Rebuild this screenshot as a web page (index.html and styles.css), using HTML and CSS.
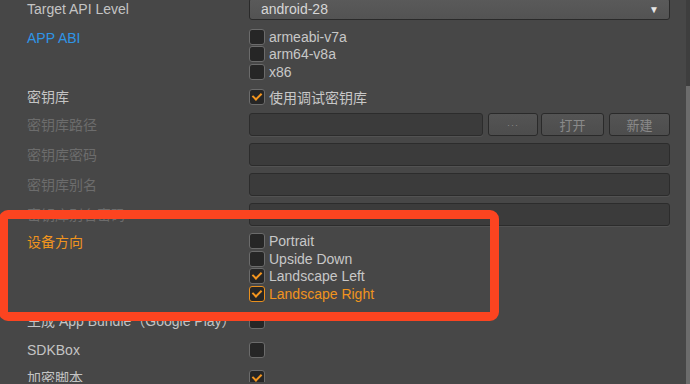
FILE: index.html
```html
<!DOCTYPE html>
<html lang="zh">
<head>
    <meta charset="UTF-8">
    <title>Android Settings</title>
    <link rel="stylesheet" href="styles.css">
</head>
<body>
    <div class="panel">
        <div class="row row-target">
            <div class="label">Target API Level</div>
            <div class="control">
                <div class="dropdown"><span>android-28</span><span class="arrow">▼</span></div>
            </div>
        </div>

        <div class="row row-abi">
            <div class="label blue">APP ABI</div>
            <div class="control list">
                <div class="check"><span class="box"></span>armeabi-v7a</div>
                <div class="check"><span class="box"></span>arm64-v8a</div>
                <div class="check"><span class="box"></span>x86</div>
            </div>
        </div>

        <div class="row row-keystore">
            <div class="label">密钥库</div>
            <div class="control">
                <div class="check"><span class="box on"></span>使用调试密钥库</div>
            </div>
        </div>

        <div class="row field-row">
            <div class="label dim">密钥库路径</div>
            <div class="control">
                <div class="field short"></div>
                <div class="btn b1">···</div>
                <div class="btn b2">打开</div>
                <div class="btn b3">新建</div>
            </div>
        </div>
        <div class="row field-row">
            <div class="label dim">密钥库密码</div>
            <div class="control"><div class="field"></div></div>
        </div>
        <div class="row field-row">
            <div class="label dim">密钥库别名</div>
            <div class="control"><div class="field"></div></div>
        </div>
        <div class="row field-row">
            <div class="label dim">密钥库别名密码</div>
            <div class="control"><div class="field"></div></div>
        </div>

        <div class="row row-orient">
            <div class="label orange">设备方向</div>
            <div class="control list">
                <div class="check"><span class="box"></span>Portrait</div>
                <div class="check"><span class="box"></span>Upside Down</div>
                <div class="check"><span class="box on"></span>Landscape Left</div>
                <div class="check focus"><span class="box on"></span>Landscape Right</div>
            </div>
        </div>

        <div class="row row-bundle">
            <div class="label">生成 App Bundle（Google Play）</div>
            <div class="control"><div class="check"><span class="box"></span></div></div>
        </div>
        <div class="row row-sdk">
            <div class="label">SDKBox</div>
            <div class="control"><div class="check"><span class="box"></span></div></div>
        </div>
        <div class="row row-encrypt">
            <div class="label">加密脚本</div>
            <div class="control"><div class="check"><span class="box on"></span></div></div>
        </div>

        <div class="highlight"></div>
    </div>
    <div class="scrollbar"><div class="thumb"></div></div>
</body>
</html>
```
FILE: styles.css
```css
body{margin: 0; padding: 0; background-color: #474747; overflow: hidden;
    font-family: "Liberation Sans", "Noto Sans CJK SC", sans-serif; font-size: 14px; color: #c4c4c4;}

.panel{position: relative; width: 670px; height: 384px; margin-top: -2px;}

.row{display: flex; align-items: flex-start;}
.label{width: 222px; padding-left: 27px; flex-shrink: 0; white-space: nowrap; line-height: 16px;}
.control{flex: 1; display: flex;}
.list{flex-direction: column;}

.blue{color: #2f95e6;}
.orange{color: #f0941e;}
.dim{color: #6c6c6c;}

/* rows */
.row-target{height: 22px; align-items: center;}
.row-abi{margin-top: 8px;}
.row-abi .label{margin-top: 2px;}
.row-keystore{margin-top: 7px; align-items: center;}
.field-row{height: 23px; margin-top: 7px; align-items: center;}
.row-keystore + .field-row{margin-top: 8px;}
.row-orient{margin-top: 6px;}
.row-orient .label{margin-top: 2px;}
.row-bundle{margin-top: 9px; align-items: center;}
.row-sdk{margin-top: 12px; align-items: center;}
.row-encrypt{margin-top: 10px; align-items: center;}

/* dropdown */
.dropdown{flex: 1; height: 20px; display: flex; align-items: center; justify-content: space-between;
    padding: 0 10px 0 11px; border: 1px solid #2a2a2a; border-radius: 3px;
    background: linear-gradient(#5a5a5a, #535353); color: #d6d6d6;}
.arrow{font-size: 10px; color: #e6e6e6;}

/* checkbox */
.check{display: flex; align-items: center; height: 17.6px; white-space: nowrap; color: #c8c8c8;}
.box{width: 14px; height: 14px; border: 1px solid #6b6b6b; border-radius: 3px; background-color: #262626;
    margin-right: 4px; position: relative; box-sizing: content-box;}
.box.on::after{content: ""; position: absolute; left: 4px; top: 1px; width: 4px; height: 7px;
    border: solid #f4961f; border-width: 0 2.5px 2.5px 0; transform: rotate(45deg);}
.focus{color: #f0941e;}
.focus .box{border-color: #e8901e;}

/* text fields & buttons */
.field{flex: 1; height: 21px; border: 1px solid #2c2c2c; border-radius: 3px; background-color: #3b3b3b;
    box-shadow: 0 1px 0 #525252;}
.field.short{flex: none; width: 232px;}
.btn{height: 21px; border: 1px solid #2a2a2a; border-radius: 3px; background: linear-gradient(#545454, #4d4d4d);
    color: #8a8a8a; display: flex; align-items: center; justify-content: center; font-size: 13px;}
.b1{width: 48px; margin-left: 5px; font-size: 9px; letter-spacing: 1px;}
.b2{width: 61px; margin-left: 3px;}
.b3{width: 59px; margin-left: 5px;}

/* red annotation */
.highlight{position: absolute; left: -1px; top: 212px; width: 482px; height: 93px;
    border: 9px solid #fc4420; border-radius: 9px;}

.scrollbar{position: fixed; top: 0; right: 0; width: 4px; height: 384px; background-color: #3e3e3e;}
.thumb{margin-top: 86px; height: 298px; background-color: #6c6c6c;}
```
